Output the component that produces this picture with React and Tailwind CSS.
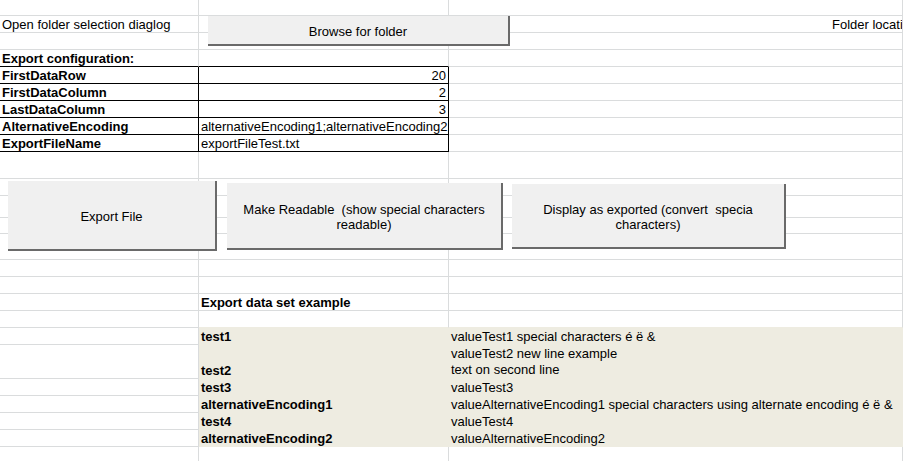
import React from 'react';
import clsx from 'clsx';

// one entry per spreadsheet row, top to bottom
const ROWS = [
    { h: 'h-[16px]' },
    { h: 'h-[17px]', a: 'Open folder selection diaglog', c: 'Folder locati', cPad: true },
    { h: 'h-[17px]' },
    { h: 'h-[17px]', a: 'Export configuration:', aBold: true, blackBottom: true },
    { h: 'h-[17px]', a: 'FirstDataRow', aBold: true, b: '20', bRight: true, table: true },
    { h: 'h-[17px]', a: 'FirstDataColumn', aBold: true, b: '2', bRight: true, table: true },
    { h: 'h-[17px]', a: 'LastDataColumn', aBold: true, b: '3', bRight: true, table: true },
    { h: 'h-[17px]', a: 'AlternativeEncoding', aBold: true, b: 'alternativeEncoding1;alternativeEncoding2', table: true },
    { h: 'h-[17px]', a: 'ExportFileName', aBold: true, b: 'exportFileTest.txt', table: true },
    { h: 'h-[27px]' },
    { h: 'h-[17px]' },
    { h: 'h-[22px]' },
    { h: 'h-[16px]' },
    { h: 'h-[26px]' },
    { h: 'h-[17px]' },
    { h: 'h-[17px]' },
    { h: 'h-[17px]', b: 'Export data set example', bBold: true },
    { h: 'h-[17px]', shadeBottom: true },
    { h: 'h-[17px]', b: 'test1', bBold: true, c: 'valueTest1 special characters é ë &', shaded: true },
    { h: 'h-[34px]', b: 'test2', bBold: true, c: ['valueTest2 new line example', 'text on second line'], shaded: true },
    { h: 'h-[17px]', b: 'test3', bBold: true, c: 'valueTest3', shaded: true },
    { h: 'h-[17px]', b: 'alternativeEncoding1', bBold: true, c: 'valueAlternativeEncoding1 special characters using alternate encoding é ë &', shaded: true },
    { h: 'h-[17px]', b: 'test4', bBold: true, c: 'valueTest4', shaded: true },
    { h: 'h-[17px]', b: 'alternativeEncoding2', bBold: true, c: 'valueAlternativeEncoding2', shaded: true },
    { h: 'h-[17px]' },
];

function Cell({ className, children }) {
    return (
        <div className={clsx('flex items-end overflow-hidden whitespace-nowrap border-r border-b leading-[14px]', className)}>
            {children}
        </div>
    );
}

function SheetButton({ className, children }) {
    return (
        <div
            className={clsx(
                'absolute flex items-center justify-center pt-[3px] text-center bg-[#f0f0f0] border-r-2 border-b-2 border-r-[#6a6a6a] border-b-[#6a6a6a] text-[13px] leading-[15px] text-black whitespace-pre',
                className
            )}
        >
            <div>{children}</div>
        </div>
    );
}

export default function App() {
    return (
        <div
            className="relative w-[903px] h-[461px] overflow-hidden bg-white text-black text-[13px]"
            style={{ fontFamily: '"Liberation Sans", Arial, sans-serif' }}
        >
            <div className="flex flex-col">
                {ROWS.map((row, i) => {
                    const black = row.table;
                    const aBorder = clsx(
                        black || row.blackBottom ? 'border-b-black' : 'border-b-[#dadcdd]',
                        black ? 'border-r-black' : 'border-r-[#dadcdd]'
                    );
                    const bBorder = row.shaded
                        ? 'bg-[#eeece1] border-r-[#eeece1] border-b-[#eeece1]'
                        : clsx(
                              black || row.blackBottom ? 'border-b-black' : row.shadeBottom ? 'border-b-[#eeece1]' : 'border-b-[#dadcdd]',
                              black ? 'border-r-black' : 'border-r-[#dadcdd]'
                          );
                    const cBorder = row.shaded
                        ? 'bg-[#eeece1] border-r-[#eeece1] border-b-[#eeece1]'
                        : row.shadeBottom
                          ? 'border-r-[#dadcdd] border-b-[#eeece1]'
                          : 'border-r-[#dadcdd] border-b-[#dadcdd]';

                    return (
                        <div key={i} className={clsx('flex', row.h)}>
                            <Cell className={clsx('w-[199px] shrink-0 pl-[2px]', aBorder, row.aBold && 'font-bold')}>
                                {row.a}
                            </Cell>
                            <Cell
                                className={clsx(
                                    'w-[250px] shrink-0 px-[2px]',
                                    bBorder,
                                    row.bBold && 'font-bold',
                                    row.bRight && 'justify-end'
                                )}
                            >
                                {row.b}
                            </Cell>
                            <Cell className={clsx('flex-1 min-w-0 pl-[2px]', cBorder, row.cPad && 'pl-[383px]')}>
                                {Array.isArray(row.c) ? (
                                    <div className="flex flex-col leading-[16px]">
                                        {row.c.map(line => (
                                            <span key={line}>{line}</span>
                                        ))}
                                    </div>
                                ) : (
                                    row.c
                                )}
                            </Cell>
                        </div>
                    );
                })}
            </div>

            {/* form buttons floating over the sheet */}
            <SheetButton className="left-[208px] top-[16px] w-[302px] h-[30px]">Browse for folder</SheetButton>
            <SheetButton className="left-[8px] top-[181px] w-[209px] h-[70px]">Export File</SheetButton>
            <SheetButton className="left-[227px] top-[183px] w-[276px] h-[67px]">
                {'Make Readable  (show special characters\nreadable)'}
            </SheetButton>
            <SheetButton className="left-[512px] top-[184px] w-[274px] h-[65px]">
                {'Display as exported (convert  specia\ncharacters)'}
            </SheetButton>
        </div>
    );
}
